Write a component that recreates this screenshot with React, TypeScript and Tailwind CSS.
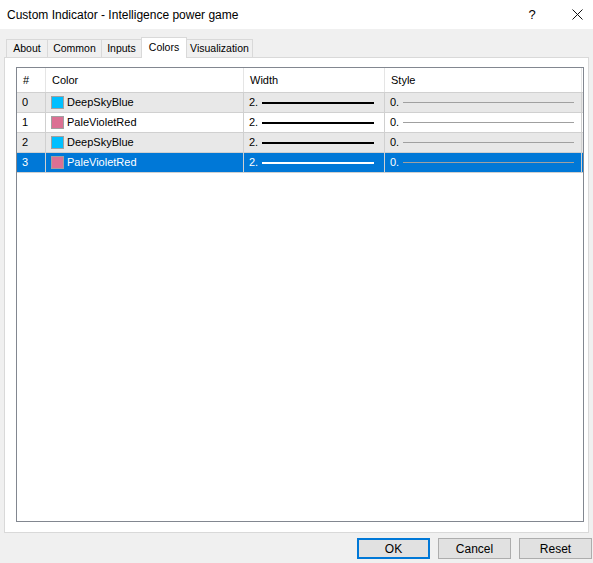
import React from "react";

const rows = [
  { n: "0", name: "DeepSkyBlue", color: "#00bfff", bg: "bg-[#e8e8e8]", sel: false },
  { n: "1", name: "PaleVioletRed", color: "#db7093", bg: "bg-white", sel: false },
  { n: "2", name: "DeepSkyBlue", color: "#00bfff", bg: "bg-[#e8e8e8]", sel: false },
  { n: "3", name: "PaleVioletRed", color: "#db7093", bg: "bg-[#0078d7]", sel: true },
];

const tabs = [
  { t: "About", w: "w-[42px]" },
  { t: "Common", w: "w-[55px]" },
  { t: "Inputs", w: "w-[41px]" },
  { t: "Colors", w: "w-[46px]" },
  { t: "Visualization", w: "w-[67px]" },
];

export default function App() {
  return (
    <div
      className="w-[593px] h-[563px] bg-[#f0f0f0] flex flex-col text-black overflow-hidden"
      style={{ fontFamily: '"Liberation Sans", Arial, sans-serif' }}
    >
      {/* title bar */}
      <div className="h-[29px] bg-white flex items-center pl-[7px] shrink-0">
        <div className="text-[12px] text-[#000]">Custom Indicator - Intelligence power game</div>
        <div className="flex-1" />
        <div className="text-[13px] w-[20px] text-center mr-[30px]">?</div>
        <svg width="11" height="11" viewBox="0 0 11 11" className="mr-[10px]">
          <path d="M0.5 0.5 L10.5 10.5 M10.5 0.5 L0.5 10.5" stroke="#111" strokeWidth="1" />
        </svg>
      </div>

      {/* tabs */}
      <div className="pl-[6px] pt-[7px] flex items-end h-[28px] shrink-0 relative z-10">
        {tabs.map(({ t, w }) => {
          const active = t === "Colors";
          return active ? (
            <div
              key={t}
              className={`${w} h-[21px] -mb-[1px] -ml-[1px] bg-white border border-b-0 border-[#d9d9d9] text-[10.5px] flex justify-center items-start pt-[2px]`}
            >
              {t}
            </div>
          ) : (
            <div
              key={t}
              className={`${w} h-[18px] bg-[#f0f0f0] border border-b-0 border-[#d9d9d9] -ml-[1px] first:ml-0 text-[10.5px] flex justify-center items-center`}
            >
              {t}
            </div>
          );
        })}
      </div>

      {/* panel */}
      <div className="mx-[4px] bg-white border border-[#d9d9d9] h-[476px] shrink-0 pl-[11px] pr-[4px] pt-[9px] pb-[10px] flex">
        <div className="flex-1 border border-[#828790] bg-white flex flex-col text-[11px]">
          {/* header */}
          <div className="flex h-[25px] border-b border-[#d0d0d0] shrink-0">
            <div className="w-[29px] border-r border-[#e5e5e5] pl-[6px] flex items-center">#</div>
            <div className="w-[198px] border-r border-[#e5e5e5] pl-[6px] flex items-center">Color</div>
            <div className="w-[141px] border-r border-[#e5e5e5] pl-[6px] flex items-center">Width</div>
            <div className="flex-1 pl-[6px] flex items-center border-r border-[#e5e5e5] mr-[1px]">Style</div>
          </div>
          {rows.map((r) => (
            <div
              key={r.n + r.name}
              className={`flex h-[20px] border-b border-[#d0d0d0] shrink-0 ${r.bg} ${r.sel ? "text-white" : "text-black"}`}
            >
              <div className="w-[29px] border-r border-[#d0d0d0] pl-[5px] flex items-center">{r.n}</div>
              <div className="w-[198px] border-r border-[#d0d0d0] pl-[5px] flex items-center gap-[3px]">
                <span
                  className="w-[13px] h-[13px] border border-[#a0a0a0] inline-block"
                  style={{ backgroundColor: r.color }}
                />
                <span>{r.name}</span>
              </div>
              <div className="w-[141px] border-r border-[#d0d0d0] pl-[5px] pr-[10px] flex items-center gap-[4px]">
                <span>2.</span>
                <span className={`flex-1 h-[2px] ${r.sel ? "bg-white" : "bg-black"}`} />
              </div>
              <div className="flex-1 pl-[5px] pr-[7px] flex items-center gap-[4px] border-r border-[#d0d0d0] mr-[1px]">
                <span>0.</span>
                <span className="flex-1 h-[1px] bg-[#a0a0a0]" />
              </div>
            </div>
          ))}
          <div className="flex-1" />
        </div>
      </div>

      {/* buttons */}
      <div className="flex justify-end pt-[5px] pr-[1px] gap-[8px] text-[12px]">
        <button className="w-[73px] h-[21px] bg-[#e1e1e1] border-2 border-[#0078d7] flex items-center justify-center">
          OK
        </button>
        <button className="w-[73px] h-[21px] bg-[#e1e1e1] border border-[#adadad] flex items-center justify-center">
          Cancel
        </button>
        <button className="w-[73px] h-[21px] bg-[#e1e1e1] border border-[#adadad] flex items-center justify-center">
          Reset
        </button>
      </div>
    </div>
  );
}
